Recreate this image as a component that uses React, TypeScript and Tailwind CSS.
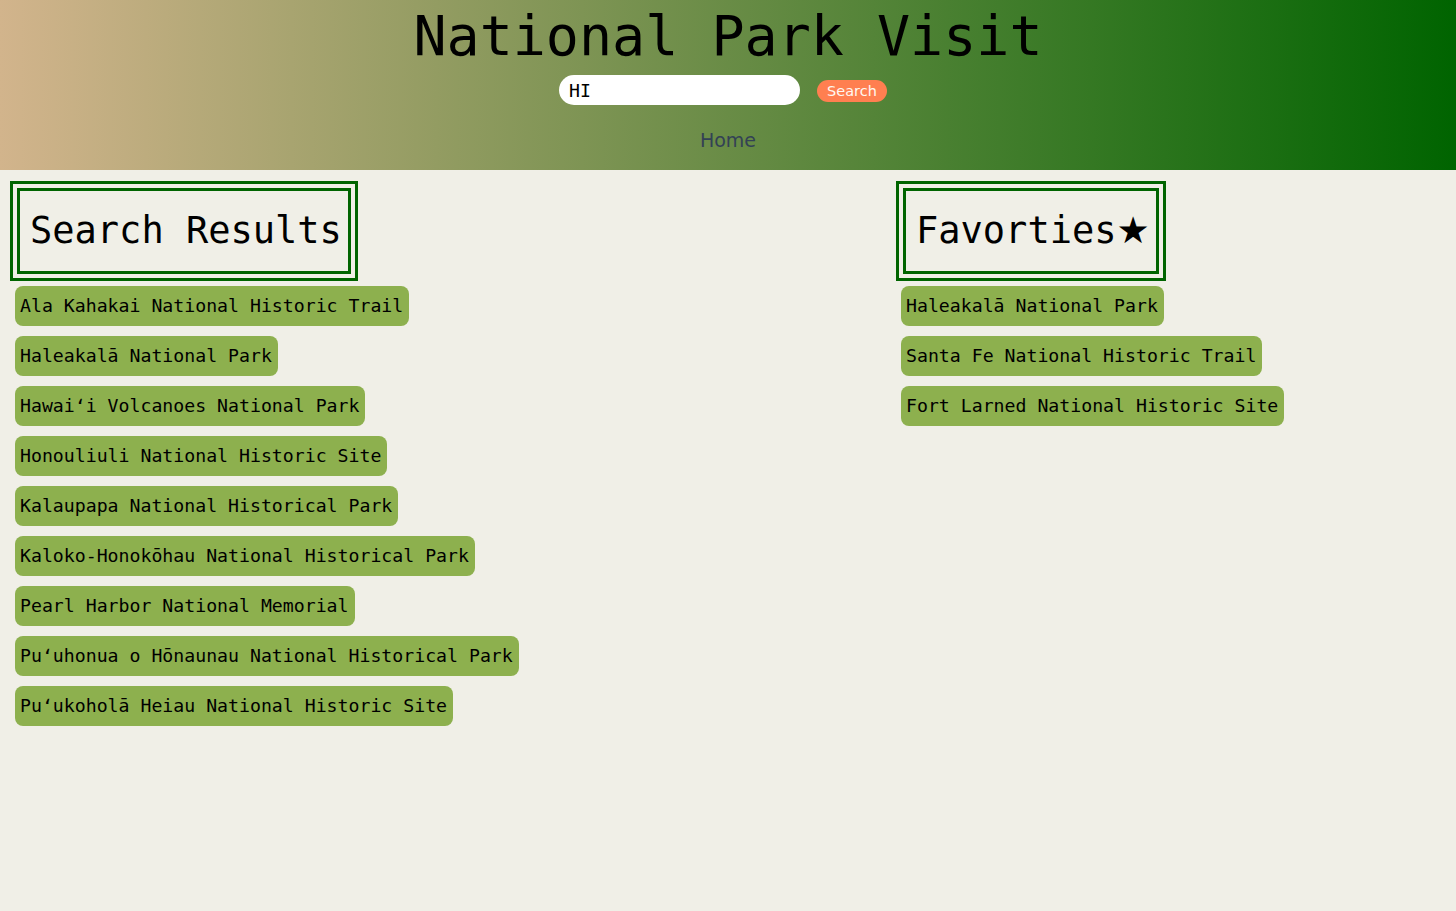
const RESULTS = [
  "Ala Kahakai National Historic Trail",
  "Haleakalā National Park",
  "Hawaiʻi Volcanoes National Park",
  "Honouliuli National Historic Site",
  "Kalaupapa National Historical Park",
  "Kaloko-Honokōhau National Historical Park",
  "Pearl Harbor National Memorial",
  "Puʻuhonua o Hōnaunau National Historical Park",
  "Puʻukoholā Heiau National Historic Site",
];

const FAVORITES = [
  "Haleakalā National Park",
  "Santa Fe National Historic Trail",
  "Fort Larned National Historic Site",
];

function ParkList({ parks }: { parks: string[] }) {
  return (
    <div className="mt-[5px] flex flex-col items-start gap-[10px] pl-[5px]">
      {parks.map((park) => (
        <button
          key={park}
          className="h-10 rounded-lg bg-[#8db04e] pl-[5px] pr-[6px] text-[18.2px] leading-10 text-black"
        >
          {park}
        </button>
      ))}
    </div>
  );
}

function SectionTitle({ children }: { children: React.ReactNode }) {
  return (
    <div className="inline-block border-[10px] border-double border-[#006400]">
      <h2 className="py-[18px] pl-[10px] pr-[6px] text-[37px] leading-[44px] text-black">{children}</h2>
    </div>
  );
}

export default function App() {
  return (
    <div className="min-h-screen bg-[#f0efe7] font-['DejaVu_Sans_Mono',monospace]">
      <header className="flex h-[170px] flex-col items-center bg-[linear-gradient(to_right,#d2b48c,#006400)] pt-1">
        <h1 className="text-[55px] leading-[64px] text-black">National Park Visit</h1>
        <form className="mt-[7px] flex items-center" onSubmit={(e) => e.preventDefault()}>
          <input
            defaultValue="HI"
            className="h-[30px] w-[241px] rounded-full bg-white pl-[10px] text-[18.2px] text-black outline-none"
          />
          <button className="ml-[17px] mr-[10px] mt-[2px] h-[22px] w-[70px] rounded-full bg-[#ff7f50] font-['DejaVu_Sans',sans-serif] text-[14.5px] leading-[22px] text-[#fff8f0]">
            Search
          </button>
        </form>
        <nav className="mt-[21px] font-['DejaVu_Sans',sans-serif] text-[19px] text-[#334155]">Home</nav>
      </header>
      <main className="flex px-[10px] pt-[11px]">
        <section className="w-[886px] shrink-0">
          <SectionTitle>Search Results</SectionTitle>
          <ParkList parks={RESULTS} />
        </section>
        <section>
          <SectionTitle>
            Favorties
            <span className="font-['DejaVu_Sans',sans-serif]">★</span>
          </SectionTitle>
          <ParkList parks={FAVORITES} />
        </section>
      </main>
    </div>
  );
}
